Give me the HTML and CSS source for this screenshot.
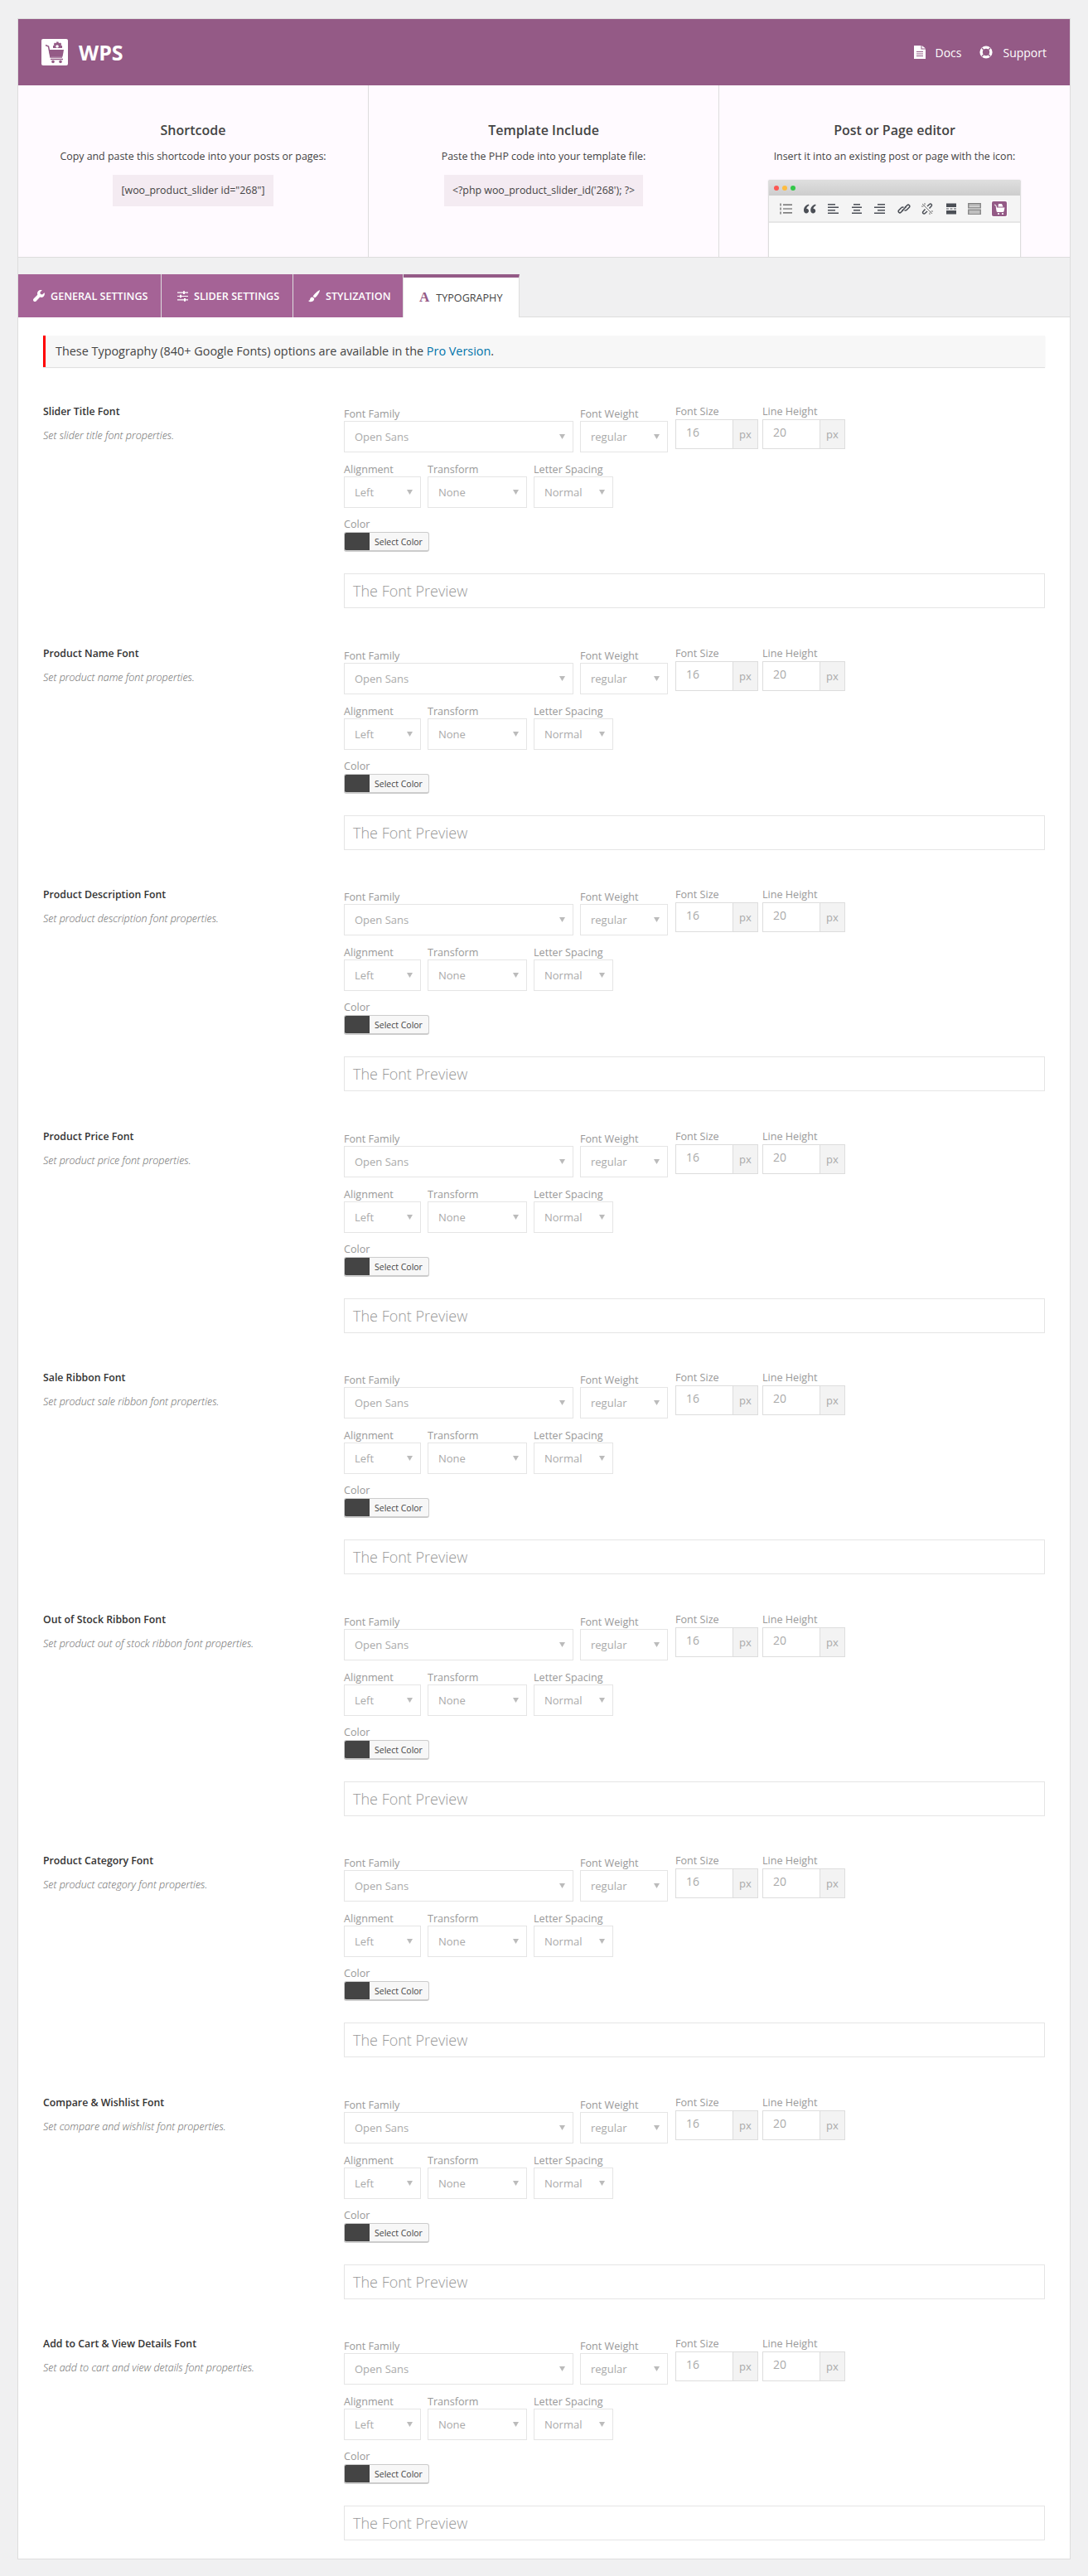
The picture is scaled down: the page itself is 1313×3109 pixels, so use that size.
FILE: index.html
```html
<!DOCTYPE html>
<html lang="en">
<head>
    <meta charset="UTF-8">
    <title>WPS Typography</title>
    <link rel="stylesheet" href="styles.css">
</head>
<body>
<svg class="defs" width="0" height="0">
    <symbol id="ic-triangle" viewBox="0 0 7 6"><path d="M0 0h7L3.500 6z"/></symbol>
</svg>
<div class="wrap">
    <header class="top-bar">
        <div class="brand">
            <svg class="logo" viewBox="0 0 32 32" width="32" height="32">
                <rect width="32" height="32" rx="2" fill="#fff"/>
                <path d="M5 7.500l3.500 1.500 2.500 13h14" fill="none" stroke="#945a86" stroke-width="1.500"/>
                <path d="M9 13h18l-1.500 8.500H10.500z" fill="#945a86"/>
                <path d="M18 3.500h2.500l.5 1.700 1.700-.7 1.500 1.500-.8 1.600 1.600.7V11h-11V8.300l1.600-.7-.8-1.600 1.500-1.500 1.700.7z" fill="#945a86"/>
                <circle cx="19" cy="9" r="1.800" fill="#fff"/>
                <path d="M11 24.500h15" stroke="#945a86" stroke-width="1.500"/>
                <circle cx="14" cy="27.500" r="1.800" fill="#945a86"/>
                <circle cx="23" cy="27.500" r="1.800" fill="#945a86"/>
            </svg>
            <span class="brand-name">WPS</span>
        </div>
        <nav class="top-links">
            <a class="top-link" href="#">
                <svg viewBox="0 0 14 16" width="14" height="16"><path fill="#fff" fill-rule="evenodd" d="M0 0h8.500v4.500H14V16H0zM9.500 0L14 3.500H9.500zM3 7v1h8V7zM3 9.500v1h8v-1zM3 12v1h8v-1z"/></svg>
                Docs
            </a>
            <a class="top-link" href="#">
                <svg viewBox="0 0 16 16" width="16" height="16"><circle cx="8" cy="8" r="5.900" fill="none" stroke="#fff" stroke-width="3.400"/><path d="M3 3l2.700 2.700M13 3l-2.700 2.700M3 13l2.700-2.700M13 13l-2.700-2.700" stroke="#945a86" stroke-width="1.300"/></svg>
                Support
            </a>
        </nav>
    </header>

    <section class="info">
        <div class="info-col">
            <h3>Shortcode</h3>
            <p>Copy and paste this shortcode into your posts or pages:</p>
            <div class="code-box">[woo_product_slider id="268"]</div>
        </div>
        <div class="info-col">
            <h3>Template Include</h3>
            <p>Paste the PHP code into your template file:</p>
            <div class="code-box">&lt;?php woo_product_slider_id('268'); ?&gt;</div>
        </div>
        <div class="info-col">
            <h3>Post or Page editor</h3>
            <p>Insert it into an existing post or page with the icon:</p>
            <div class="editor">
                <div class="editor-title"><i class="dot red"></i><i class="dot yellow"></i><i class="dot green"></i></div>
                <div class="editor-tools">
                    <svg viewBox="0 0 16 16" width="16" height="16" fill="#555"><path d="M5 2.500h11v1.200H5zM5 7.400h11v1.200H5zM5 12.300h11v1.200H5z"/><path fill="#999" d="M1 1.500h2v3H1zM1 6.500h2v3H1zM1 11.500h2v3H1z"/></svg>
                    <svg viewBox="0 0 16 16" width="16" height="16" fill="#4b4f56"><path d="M6.800 2.500C3.500 3.700 1 6 1 9.700 1 12 2.300 13.500 4 13.500s3-1.200 3-2.900-1.200-2.800-2.800-2.800c.2-1.400 1.400-2.700 3.300-3.700zM15 2.500c-3.300 1.200-5.800 3.500-5.800 7.200 0 2.300 1.300 3.800 3 3.800s3-1.200 3-2.900-1.200-2.800-2.800-2.800c.2-1.400 1.400-2.700 3.300-3.700z"/></svg>
                    <svg viewBox="0 0 16 16" width="16" height="16" fill="#4b4f56"><path d="M2 2h9v1.500H2zM2 5.500h13V7H2zM2 9h9v1.500H2zM2 12.500h13V14H2z"/></svg>
                    <svg viewBox="0 0 16 16" width="16" height="16" fill="#4b4f56"><path d="M4 2h8v1.500H4zM2 5.500h12V7H2zM4 9h8v1.500H4zM2 12.500h12V14H2z"/></svg>
                    <svg viewBox="0 0 16 16" width="16" height="16" fill="#4b4f56"><path d="M5 2h9v1.500H5zM1 5.500h13V7H1zM5 9h9v1.500H5zM1 12.500h13V14H1z"/></svg>
                    <svg viewBox="0 0 16 16" width="16" height="16" fill="none" stroke="#4b4f56" stroke-width="1.600"><path d="M7 9.500l-2.800 2.800a1.700 1.700 0 0 1-2.500-2.500L5 6.500a1.700 1.700 0 0 1 2.500 0"/><path d="M9 6.500l2.800-2.800a1.700 1.700 0 0 1 2.500 2.500L11 9.500a1.700 1.700 0 0 1-2.500 0"/><path d="M5.500 10.500l5-5"/></svg>
                    <svg viewBox="0 0 16 16" width="16" height="16" fill="none" stroke="#4b4f56" stroke-width="1.500"><path d="M5.500 8.500l-2.500 2.700a1.600 1.600 0 0 0 2.300 2.300L8 11"/><path d="M10.500 7.500L13 4.800a1.600 1.600 0 0 0-2.300-2.300L8 5"/><path d="M2 2l12 12M1 5h2.500M5 1v2.500M15 11h-2.500M11 15v-2.500" stroke="#777" stroke-width="1"/></svg>
                    <svg viewBox="0 0 16 16" width="16" height="16" fill="#4b4f56"><path d="M2 1.500h12V6H2zM2 10h12v4.500H2zM2 7.500h3v1H2zM6.500 7.500h3v1h-3zM11 7.500h3v1h-3z"/></svg>
                    <svg viewBox="0 0 16 16" width="16" height="16"><path fill="#8a8a8a" fill-rule="evenodd" d="M0 1h16v6.500H0zM0 8.500h16V15H0zM1.500 3v1h13V3zM1.500 5v1h13V5zM1.500 10.500v1h13v-1zM1.500 12.500v1h13v-1z"/></svg>
                    <svg class="plugin-ic" viewBox="0 0 18 18" width="18" height="18">
                        <rect width="18" height="18" rx="2" fill="#945a86"/>
                        <path d="M3 4l2 1 1.200 7.500h8" fill="none" stroke="#fff" stroke-width="1"/>
                        <path d="M5.500 7.500h10l-1 4.500H6.300zM8 3h4l1.500 3.500h-6z" fill="#fff"/>
                        <circle cx="8" cy="15" r="1.100" fill="#fff"/><circle cx="13" cy="15" r="1.100" fill="#fff"/>
                    </svg>
                </div>
            </div>
        </div>
    </section>

    <div class="tabs">
        <a class="tab tab-general" href="#">
            <svg viewBox="0 0 14 15" width="14" height="15" fill="#fff"><path d="M13.600 3.200l-2.500 2.400-2.200-.6-.6-2.200L10.800.3C9.200-.3 7.400 0 6.200 1.300 5 2.500 4.700 4.200 5.300 5.700L.6 10.400c-.8.800-.8 2.200 0 3s2.200.8 3 0l4.700-4.800c1.500.6 3.200.3 4.400-.9 1.200-1.200 1.500-3 .9-4.500z"/></svg>
            General Settings
        </a>
        <a class="tab tab-slider" href="#">
            <svg viewBox="0 0 13 13" width="13" height="13" fill="#fff"><path d="M0 1.500h13v1.200H0zM0 5.900h13v1.200H0zM0 10.300h13v1.200H0z"/><path d="M7 .3h2v3.600H7zM3 4.700h2v3.600H3zM8 9.100h2v3.600H8z"/></svg>
            Slider Settings
        </a>
        <a class="tab tab-style" href="#">
            <svg viewBox="0 0 14 15" width="14" height="15" fill="#fff"><path d="M13.800.2c-.6-.5-3.800 2.200-6.400 5-.9 1-1.400 1.800-1.700 2.500l2.200 1.800c.6-.4 1.400-1 2.300-2 2.500-2.800 4.200-6.700 3.600-7.300zM5.200 8.500C3.300 8.500 2.400 9.700 2.200 11c-.2 1.300-.8 1.800-2.200 2 1.200 1.400 3.500 1.500 5 .8 1.800-.8 2.500-2.600 2-3.800z"/></svg>
            Stylization
        </a>
        <a class="tab tab-active" href="#"><span class="tab-a">A</span>Typography</a>
    </div>

    <main class="content">
        <div class="notice">These Typography (840+ Google Fonts) options are available in the <a href="#">Pro Version</a>.</div>

        <section class="font-set">
            <div class="font-info"><h4>Slider Title Font</h4><p>Set slider title font properties.</p></div>
            <div class="font-fields">
                <div class="field-row">
                    <div class="field w-family"><label>Font Family</label><div class="select">Open Sans<svg width="7" height="6"><use href="#ic-triangle"/></svg></div></div>
                    <div class="field w-weight"><label>Font Weight</label><div class="select">regular<svg width="7" height="6"><use href="#ic-triangle"/></svg></div></div>
                    <div class="field num-field"><label>Font Size</label><div class="num"><span>16</span><b>px</b></div></div>
                    <div class="field num-field"><label>Line Height</label><div class="num"><span>20</span><b>px</b></div></div>
                </div>
                <div class="field-row">
                    <div class="field w-align"><label>Alignment</label><div class="select">Left<svg width="7" height="6"><use href="#ic-triangle"/></svg></div></div>
                    <div class="field w-transform"><label>Transform</label><div class="select">None<svg width="7" height="6"><use href="#ic-triangle"/></svg></div></div>
                    <div class="field w-spacing"><label>Letter Spacing</label><div class="select">Normal<svg width="7" height="6"><use href="#ic-triangle"/></svg></div></div>
                </div>
                <div class="color-field"><label>Color</label><div class="color-btn"><i></i><span>Select Color</span></div></div>
                <div class="preview">The Font Preview</div>
            </div>
        </section>

        <section class="font-set">
            <div class="font-info"><h4>Product Name Font</h4><p>Set product name font properties.</p></div>
            <div class="font-fields">
                <div class="field-row">
                    <div class="field w-family"><label>Font Family</label><div class="select">Open Sans<svg width="7" height="6"><use href="#ic-triangle"/></svg></div></div>
                    <div class="field w-weight"><label>Font Weight</label><div class="select">regular<svg width="7" height="6"><use href="#ic-triangle"/></svg></div></div>
                    <div class="field num-field"><label>Font Size</label><div class="num"><span>16</span><b>px</b></div></div>
                    <div class="field num-field"><label>Line Height</label><div class="num"><span>20</span><b>px</b></div></div>
                </div>
                <div class="field-row">
                    <div class="field w-align"><label>Alignment</label><div class="select">Left<svg width="7" height="6"><use href="#ic-triangle"/></svg></div></div>
                    <div class="field w-transform"><label>Transform</label><div class="select">None<svg width="7" height="6"><use href="#ic-triangle"/></svg></div></div>
                    <div class="field w-spacing"><label>Letter Spacing</label><div class="select">Normal<svg width="7" height="6"><use href="#ic-triangle"/></svg></div></div>
                </div>
                <div class="color-field"><label>Color</label><div class="color-btn"><i></i><span>Select Color</span></div></div>
                <div class="preview">The Font Preview</div>
            </div>
        </section>

        <section class="font-set">
            <div class="font-info"><h4>Product Description Font</h4><p>Set product description font properties.</p></div>
            <div class="font-fields">
                <div class="field-row">
                    <div class="field w-family"><label>Font Family</label><div class="select">Open Sans<svg width="7" height="6"><use href="#ic-triangle"/></svg></div></div>
                    <div class="field w-weight"><label>Font Weight</label><div class="select">regular<svg width="7" height="6"><use href="#ic-triangle"/></svg></div></div>
                    <div class="field num-field"><label>Font Size</label><div class="num"><span>16</span><b>px</b></div></div>
                    <div class="field num-field"><label>Line Height</label><div class="num"><span>20</span><b>px</b></div></div>
                </div>
                <div class="field-row">
                    <div class="field w-align"><label>Alignment</label><div class="select">Left<svg width="7" height="6"><use href="#ic-triangle"/></svg></div></div>
                    <div class="field w-transform"><label>Transform</label><div class="select">None<svg width="7" height="6"><use href="#ic-triangle"/></svg></div></div>
                    <div class="field w-spacing"><label>Letter Spacing</label><div class="select">Normal<svg width="7" height="6"><use href="#ic-triangle"/></svg></div></div>
                </div>
                <div class="color-field"><label>Color</label><div class="color-btn"><i></i><span>Select Color</span></div></div>
                <div class="preview">The Font Preview</div>
            </div>
        </section>

        <section class="font-set">
            <div class="font-info"><h4>Product Price Font</h4><p>Set product price font properties.</p></div>
            <div class="font-fields">
                <div class="field-row">
                    <div class="field w-family"><label>Font Family</label><div class="select">Open Sans<svg width="7" height="6"><use href="#ic-triangle"/></svg></div></div>
                    <div class="field w-weight"><label>Font Weight</label><div class="select">regular<svg width="7" height="6"><use href="#ic-triangle"/></svg></div></div>
                    <div class="field num-field"><label>Font Size</label><div class="num"><span>16</span><b>px</b></div></div>
                    <div class="field num-field"><label>Line Height</label><div class="num"><span>20</span><b>px</b></div></div>
                </div>
                <div class="field-row">
                    <div class="field w-align"><label>Alignment</label><div class="select">Left<svg width="7" height="6"><use href="#ic-triangle"/></svg></div></div>
                    <div class="field w-transform"><label>Transform</label><div class="select">None<svg width="7" height="6"><use href="#ic-triangle"/></svg></div></div>
                    <div class="field w-spacing"><label>Letter Spacing</label><div class="select">Normal<svg width="7" height="6"><use href="#ic-triangle"/></svg></div></div>
                </div>
                <div class="color-field"><label>Color</label><div class="color-btn"><i></i><span>Select Color</span></div></div>
                <div class="preview">The Font Preview</div>
            </div>
        </section>

        <section class="font-set">
            <div class="font-info"><h4>Sale Ribbon Font</h4><p>Set product sale ribbon font properties.</p></div>
            <div class="font-fields">
                <div class="field-row">
                    <div class="field w-family"><label>Font Family</label><div class="select">Open Sans<svg width="7" height="6"><use href="#ic-triangle"/></svg></div></div>
                    <div class="field w-weight"><label>Font Weight</label><div class="select">regular<svg width="7" height="6"><use href="#ic-triangle"/></svg></div></div>
                    <div class="field num-field"><label>Font Size</label><div class="num"><span>16</span><b>px</b></div></div>
                    <div class="field num-field"><label>Line Height</label><div class="num"><span>20</span><b>px</b></div></div>
                </div>
                <div class="field-row">
                    <div class="field w-align"><label>Alignment</label><div class="select">Left<svg width="7" height="6"><use href="#ic-triangle"/></svg></div></div>
                    <div class="field w-transform"><label>Transform</label><div class="select">None<svg width="7" height="6"><use href="#ic-triangle"/></svg></div></div>
                    <div class="field w-spacing"><label>Letter Spacing</label><div class="select">Normal<svg width="7" height="6"><use href="#ic-triangle"/></svg></div></div>
                </div>
                <div class="color-field"><label>Color</label><div class="color-btn"><i></i><span>Select Color</span></div></div>
                <div class="preview">The Font Preview</div>
            </div>
        </section>

        <section class="font-set">
            <div class="font-info"><h4>Out of Stock Ribbon Font</h4><p>Set product out of stock ribbon font properties.</p></div>
            <div class="font-fields">
                <div class="field-row">
                    <div class="field w-family"><label>Font Family</label><div class="select">Open Sans<svg width="7" height="6"><use href="#ic-triangle"/></svg></div></div>
                    <div class="field w-weight"><label>Font Weight</label><div class="select">regular<svg width="7" height="6"><use href="#ic-triangle"/></svg></div></div>
                    <div class="field num-field"><label>Font Size</label><div class="num"><span>16</span><b>px</b></div></div>
                    <div class="field num-field"><label>Line Height</label><div class="num"><span>20</span><b>px</b></div></div>
                </div>
                <div class="field-row">
                    <div class="field w-align"><label>Alignment</label><div class="select">Left<svg width="7" height="6"><use href="#ic-triangle"/></svg></div></div>
                    <div class="field w-transform"><label>Transform</label><div class="select">None<svg width="7" height="6"><use href="#ic-triangle"/></svg></div></div>
                    <div class="field w-spacing"><label>Letter Spacing</label><div class="select">Normal<svg width="7" height="6"><use href="#ic-triangle"/></svg></div></div>
                </div>
                <div class="color-field"><label>Color</label><div class="color-btn"><i></i><span>Select Color</span></div></div>
                <div class="preview">The Font Preview</div>
            </div>
        </section>

        <section class="font-set">
            <div class="font-info"><h4>Product Category Font</h4><p>Set product category font properties.</p></div>
            <div class="font-fields">
                <div class="field-row">
                    <div class="field w-family"><label>Font Family</label><div class="select">Open Sans<svg width="7" height="6"><use href="#ic-triangle"/></svg></div></div>
                    <div class="field w-weight"><label>Font Weight</label><div class="select">regular<svg width="7" height="6"><use href="#ic-triangle"/></svg></div></div>
                    <div class="field num-field"><label>Font Size</label><div class="num"><span>16</span><b>px</b></div></div>
                    <div class="field num-field"><label>Line Height</label><div class="num"><span>20</span><b>px</b></div></div>
                </div>
                <div class="field-row">
                    <div class="field w-align"><label>Alignment</label><div class="select">Left<svg width="7" height="6"><use href="#ic-triangle"/></svg></div></div>
                    <div class="field w-transform"><label>Transform</label><div class="select">None<svg width="7" height="6"><use href="#ic-triangle"/></svg></div></div>
                    <div class="field w-spacing"><label>Letter Spacing</label><div class="select">Normal<svg width="7" height="6"><use href="#ic-triangle"/></svg></div></div>
                </div>
                <div class="color-field"><label>Color</label><div class="color-btn"><i></i><span>Select Color</span></div></div>
                <div class="preview">The Font Preview</div>
            </div>
        </section>

        <section class="font-set">
            <div class="font-info"><h4>Compare &amp; Wishlist Font</h4><p>Set compare and wishlist font properties.</p></div>
            <div class="font-fields">
                <div class="field-row">
                    <div class="field w-family"><label>Font Family</label><div class="select">Open Sans<svg width="7" height="6"><use href="#ic-triangle"/></svg></div></div>
                    <div class="field w-weight"><label>Font Weight</label><div class="select">regular<svg width="7" height="6"><use href="#ic-triangle"/></svg></div></div>
                    <div class="field num-field"><label>Font Size</label><div class="num"><span>16</span><b>px</b></div></div>
                    <div class="field num-field"><label>Line Height</label><div class="num"><span>20</span><b>px</b></div></div>
                </div>
                <div class="field-row">
                    <div class="field w-align"><label>Alignment</label><div class="select">Left<svg width="7" height="6"><use href="#ic-triangle"/></svg></div></div>
                    <div class="field w-transform"><label>Transform</label><div class="select">None<svg width="7" height="6"><use href="#ic-triangle"/></svg></div></div>
                    <div class="field w-spacing"><label>Letter Spacing</label><div class="select">Normal<svg width="7" height="6"><use href="#ic-triangle"/></svg></div></div>
                </div>
                <div class="color-field"><label>Color</label><div class="color-btn"><i></i><span>Select Color</span></div></div>
                <div class="preview">The Font Preview</div>
            </div>
        </section>

        <section class="font-set">
            <div class="font-info"><h4>Add to Cart &amp; View Details Font</h4><p>Set add to cart and view details font properties.</p></div>
            <div class="font-fields">
                <div class="field-row">
                    <div class="field w-family"><label>Font Family</label><div class="select">Open Sans<svg width="7" height="6"><use href="#ic-triangle"/></svg></div></div>
                    <div class="field w-weight"><label>Font Weight</label><div class="select">regular<svg width="7" height="6"><use href="#ic-triangle"/></svg></div></div>
                    <div class="field num-field"><label>Font Size</label><div class="num"><span>16</span><b>px</b></div></div>
                    <div class="field num-field"><label>Line Height</label><div class="num"><span>20</span><b>px</b></div></div>
                </div>
                <div class="field-row">
                    <div class="field w-align"><label>Alignment</label><div class="select">Left<svg width="7" height="6"><use href="#ic-triangle"/></svg></div></div>
                    <div class="field w-transform"><label>Transform</label><div class="select">None<svg width="7" height="6"><use href="#ic-triangle"/></svg></div></div>
                    <div class="field w-spacing"><label>Letter Spacing</label><div class="select">Normal<svg width="7" height="6"><use href="#ic-triangle"/></svg></div></div>
                </div>
                <div class="color-field"><label>Color</label><div class="color-btn"><i></i><span>Select Color</span></div></div>
                <div class="preview">The Font Preview</div>
            </div>
        </section>
    </main>
</div>
</body>
</html>
```

FILE: styles.css
```css
* {
    box-sizing: border-box;
}

body {
    margin: 0;
    background-color: #f0f0f1;
    font-family: "Open Sans", sans-serif;
    font-size: 13px;
    color: #444;
}

a {
    text-decoration: none;
}

.defs {
    position: absolute;
}

.wrap {
    width: 1271px;
    margin: 22px 0 21px 21px;
    border: 1px solid #ddd;
}

/* header */
.top-bar {
    display: flex;
    justify-content: space-between;
    align-items: center;
    height: 80px;
    padding: 0 28px;
    background-color: #945a86;
    color: #fff;
}

.brand {
    display: flex;
    align-items: center;
    gap: 13px;
}

.brand-name {
    font-size: 25px;
    font-weight: 700;
    line-height: 32px;
}

.top-links {
    display: flex;
    gap: 22px;
}

.top-link {
    display: flex;
    align-items: center;
    gap: 12px;
    color: #fff;
    font-size: 14px;
}

/* shortcode columns */
.info {
    display: grid;
    grid-template-columns: repeat(3, 1fr);
    height: 208px;
    background-color: #fffaff;
    border-bottom: 1px solid #ddd;
}

.info-col {
    height: 207px;
    padding-top: 42px;
    border-right: 1px solid #ddd;
    text-align: center;
    overflow: hidden;
}

.info-col:last-child {
    border-right: 0;
}

.info-col h3 {
    margin: 0;
    font-size: 16px;
    font-weight: 600;
    line-height: 24px;
}

.info-col p {
    margin: 10px 0 0;
    font-size: 12.400px;
    line-height: 20px;
}

.code-box {
    display: inline-block;
    margin-top: 12px;
    padding: 0 10px;
    background-color: #f4ebf2;
    font-size: 12.400px;
    line-height: 38px;
}

.editor {
    width: 305px;
    height: 110px;
    margin: 18px auto 0;
    background-color: #fff;
    border: 1px solid #ddd;
    border-radius: 2px 2px 0 0;
    box-shadow: 0 0 2px rgba(0, 0, 0, 0.1);
}

.editor-title {
    display: flex;
    align-items: center;
    gap: 4px;
    height: 18px;
    padding-left: 6px;
    background: linear-gradient(#dedede, #cdcdcd);
}

.dot {
    width: 6px;
    height: 6px;
    border-radius: 50%;
}

.red { background-color: #fc5753; }
.yellow { background-color: #fdbc40; }
.green { background-color: #33c748; }

.editor-tools {
    display: flex;
    align-items: center;
    gap: 12.500px;
    height: 33px;
    padding-left: 12px;
    background-color: #f4f4f4;
    border-bottom: 2px solid #e6e6e6;
}

.plugin-ic {
    outline: 1px solid #fff;
}

/* tabs */
.tabs {
    display: flex;
    height: 52px;
    margin-top: 20px;
    border-bottom: 1px solid #ddd;
}

.tab {
    display: flex;
    align-items: center;
    gap: 7px;
    height: 52px;
    background-color: #a56396;
    border-right: 1px solid #ddd;
    color: #fff;
    font-size: 12.600px;
    font-weight: 600;
    text-transform: uppercase;
}

.tab-general {
    width: 173px;
    padding-left: 18px;
}

.tab-slider {
    width: 159px;
    padding-left: 19px;
}

.tab-style {
    width: 133px;
    padding-left: 18px;
}

.tab-active {
    width: 140px;
    padding-left: 19px;
    gap: 8px;
    background-color: #fff;
    border-top: 4px solid #945a86;
    border-right: 1px solid #ddd;
    color: #444;
    font-weight: 400;
}

.tab-a {
    color: #945a86;
    font-family: "Liberation Serif", serif;
    font-size: 17px;
    font-weight: 700;
}

/* typography panel */
.content {
    padding: 22px 30px;
    background-color: #fff;
}

.notice {
    height: 38px;
    padding-left: 12px;
    background-color: #f7f7f7;
    border-left: 3px solid #f00;
    box-shadow: 0 1px 1px rgba(0, 0, 0, 0.12);
    font-size: 14.400px;
    line-height: 38px;
}

.notice a {
    color: #0073aa;
}

.font-set {
    display: grid;
    grid-template-columns: 363px 1fr;
    margin-top: 45.500px;
}

.notice + .font-set {
    margin-top: 45px;
}

.font-info h4 {
    margin: 0;
    font-size: 12.300px;
    font-weight: 600;
    line-height: 18px;
    color: #333;
}

.font-info p {
    margin: 11px 0 0;
    font-size: 12.500px;
    font-style: italic;
    font-weight: 300;
    line-height: 18px;
    color: #666;
}

.font-fields {
    padding-top: 4px;
}

.field-row {
    display: flex;
    gap: 8px;
    margin-bottom: 13px;
}

.field-row + .field-row {
    margin-bottom: 12px;
}

.field label,
.color-field label {
    display: block;
    font-size: 12.600px;
    line-height: 16px;
    color: #999;
}

.w-family { width: 277px; }
.w-weight { width: 106px; margin-right: 1px; }
.w-align { width: 93px; }
.w-transform { width: 120px; }
.w-spacing { width: 96px; }

.select {
    display: flex;
    justify-content: space-between;
    align-items: center;
    height: 38px;
    padding: 0 9px 0 12px;
    border: 1px solid #e5e5e5;
    color: #aaa;
    font-size: 13px;
}

.select svg {
    fill: #bbb;
}

.num-field {
    width: 100px;
    margin-top: -3px;
    margin-right: -3px;
}

.num-field label {
    margin-bottom: 1px;
}

.num {
    display: flex;
    height: 36px;
    border: 1px solid #ddd;
    color: #aaa;
}

.num span {
    width: 69px;
    padding: 5px 0 0 12px;
    border-right: 1px solid #ddd;
    font-size: 14px;
    line-height: 20px;
}

.num b {
    flex: 1;
    background-color: #f3f3f3;
    font-size: 13px;
    font-weight: 400;
    line-height: 34px;
    text-align: center;
}

.color-field label {
    margin-bottom: 1px;
}

.color-btn {
    display: flex;
    width: 103px;
    height: 24px;
    background-color: #f7f7f7;
    border: 1px solid #ccc;
    border-bottom-width: 2px;
    border-radius: 3px;
    overflow: hidden;
}

.color-btn i {
    width: 30px;
    background-color: #444;
}

.color-btn span {
    padding-left: 6px;
    font-size: 10.500px;
    line-height: 22px;
    color: #444;
}

.preview {
    height: 42px;
    margin-top: 26px;
    padding-left: 10px;
    border: 1px solid #e5e5e5;
    font-size: 18px;
    font-weight: 300;
    line-height: 40px;
    color: #999;
}
```
